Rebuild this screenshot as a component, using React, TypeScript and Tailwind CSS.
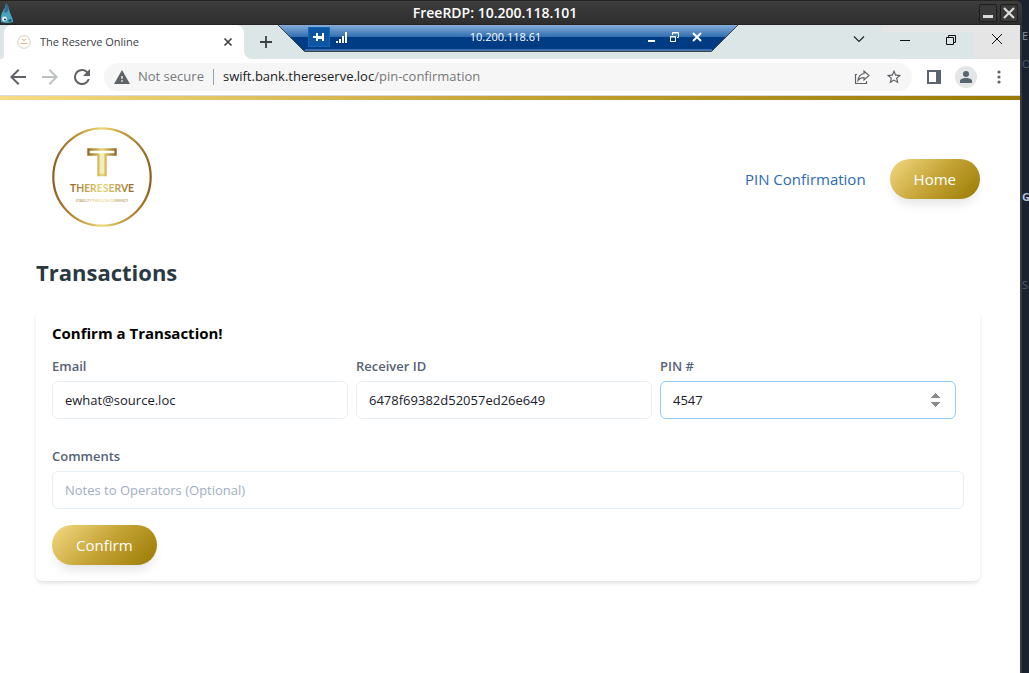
import React from "react";

const GOLD = "bg-[linear-gradient(135deg,#f3d983_0%,#c5a436_50%,#9a7a04_100%)]";

function SharkIcon() {
  return (
    <svg width="14" height="22" viewBox="0 0 14 22" aria-hidden="true">
      <path d="M6 1 Q9 4 9 8 Q11 13 13 18 V20 Q7 22 1 20 Q0 13 3 9 Q6 5 6 1Z" fill="#4aa3bd" />
      <path d="M6 1 Q9 4 8 9 Q6 12 4 10 Q6 6 6 1Z" fill="#2b6f8c" />
      <circle cx="4.500" cy="17" r="2.400" fill="#e8f4f8" />
      <circle cx="5" cy="17.500" r="1" fill="#1b3442" />
      <path d="M8 18 l3 -1 l1 2 l-3 1z" fill="#1f5c78" />
    </svg>
  );
}

function TitleBar() {
  return (
    <header className="flex h-[25px] shrink-0 items-center rounded-tr-md border-y border-[#262423] bg-linear-to-b from-[#3d3d3d] to-[#2e2e2e]">
      <div className="flex flex-1 pt-px">
        <SharkIcon />
      </div>
      <h1 className="pr-7 text-sm font-semibold text-white">FreeRDP: 10.200.118.101</h1>
      <div className="flex flex-1 justify-end gap-[3px] pr-1">
        <button aria-label="Minimize viewer" className="flex size-[18px] items-center justify-center rounded-xs border border-[#1c1c1c] bg-[#3a3a3a]">
          <svg width="16" height="16" viewBox="0 0 16 16"><rect x="3" y="10" width="10" height="3" fill="#dcdcdc" /></svg>
        </button>
        <button aria-label="Close viewer" className="flex size-[18px] items-center justify-center rounded-xs border border-[#1c1c1c] bg-[#3a3a3a]">
          <svg width="16" height="16" viewBox="0 0 16 16"><path d="M3 3 L13 13 M13 3 L3 13" stroke="#dcdcdc" strokeWidth="2.200" /></svg>
        </button>
      </div>
    </header>
  );
}

function ConnectionBar() {
  return (
    <div className="absolute top-0 left-[278px] h-[27px] w-[460px]">
      <svg className="absolute inset-0" width="460" height="27" viewBox="0 0 460 27" aria-hidden="true">
        <defs>
          <linearGradient id="bar" x1="0" y1="0" x2="0" y2="1">
            <stop offset="0" stopColor="#86add9" />
            <stop offset="0.460" stopColor="#2f6db0" />
            <stop offset="0.470" stopColor="#003c84" />
            <stop offset="1" stopColor="#003c84" />
          </linearGradient>
        </defs>
        <path d="M0 0 H460 L434 26 H26 Z" fill="url(#bar)" />
        <path d="M27 25 H434" stroke="#7fa6d6" />
        <path d="M0 0 L26.500 26.500 H433.500 L460 0" fill="none" stroke="#3c444c" />
      </svg>
      <div className="relative flex h-[23px] items-center pr-[35px] pl-[30px]">
        <div className="flex flex-1 items-center gap-[6px]">
          <button aria-label="Pin bar" className="flex h-5 w-[22px] items-center justify-center border border-[#1566b8] bg-[#0d55a3]">
            <svg width="14" height="12" viewBox="0 0 14 12" fill="#fff"><path d="M1 5h4v2H1zM4 2h2v8H4zM6 5h5v3H6zM10 2h2v8h-2z" /></svg>
          </button>
          <svg width="12" height="12" viewBox="0 0 12 12" fill="#fff" aria-hidden="true"><path d="M0 10h2v2H0zM3 8h2v4H3zM6 5h2v7H6zM9 1h2v11H9z" /></svg>
        </div>
        <span className="pt-[2px] text-[11px] text-white">10.200.118.61</span>
        <div className="flex flex-1 items-center justify-end gap-[11px]">
          <button aria-label="Minimize session">
            <svg width="12" height="12" viewBox="0 0 12 12"><path d="M3 9h7v2H3z" fill="#fff" /></svg>
          </button>
          <button aria-label="Restore session">
            <svg width="12" height="12" viewBox="0 0 12 12" fill="none" stroke="#fff"><path d="M2.500 5.500h5v5h-5zM2 6h6M4.500 4V1.500h6v5H9M4 2h7" /></svg>
          </button>
          <button aria-label="Close session">
            <svg width="12" height="12" viewBox="0 0 12 12"><path d="M2 2 L10 10 M10 2 L2 10" stroke="#fff" strokeWidth="2" /></svg>
          </button>
        </div>
      </div>
    </div>
  );
}

function TabStrip() {
  return (
    <div className="relative flex h-[34px] shrink-0 bg-[#dde6e7]">
      <div className="flex w-[244px] bg-white">
        <div className="w-1 rounded-br-lg bg-[#dde6e7]" />
        <div className="flex flex-1 items-center bg-[#dde6e7]">
          <div className="flex h-full flex-1 items-center rounded-t-lg bg-white pr-[10px] pl-[13px]">
            <svg width="14" height="14" viewBox="0 0 14 14" fill="none" aria-hidden="true">
              <circle cx="7" cy="7" r="6.300" stroke="#d9cdb8" />
              <path d="M5 4 L7 5.500 L9 4 M7 5v1.500M3.500 8.500h7" stroke="#d8b483" />
            </svg>
            <span className="ml-[9px] flex-1 text-[11px] text-[#3c4043]">The Reserve Online</span>
            <button aria-label="Close tab">
              <svg width="12" height="12" viewBox="0 0 12 12"><path d="M2.500 2.500 L9.500 9.500 M9.500 2.500 L2.500 9.500" stroke="#3c4043" strokeWidth="1.600" /></svg>
            </button>
          </div>
        </div>
      </div>
      <div className="flex flex-1 bg-white">
        <div className="flex flex-1 items-center rounded-bl-lg bg-[#dde6e7] pl-[15px]">
          <button aria-label="New tab">
            <svg width="14" height="14" viewBox="0 0 14 14"><path d="M7 1v12M1 7h12" stroke="#3c4043" strokeWidth="1.800" /></svg>
          </button>
        </div>
      </div>
      <ConnectionBar />
      <div className="relative flex items-center bg-[#dde6e7]">
        <button aria-label="Search tabs" className="flex h-full w-[46px] items-center justify-center pb-[6px]">
          <svg width="12" height="12" viewBox="0 0 12 12" fill="none" stroke="#222" strokeWidth="1.200"><path d="M1 3.500 L6 8.500 L11 3.500" /></svg>
        </button>
        <button aria-label="Minimize" className="flex h-full w-[46px] items-center justify-center border-t-[7px] border-[#e5e5e5] pb-3">
          <svg width="12" height="12" viewBox="0 0 12 12"><path d="M1 6.500h10" stroke="#111" /></svg>
        </button>
        <button aria-label="Restore" className="flex h-full w-[46px] items-center justify-center border-t-[7px] border-[#e5e5e5] pb-3">
          <svg width="12" height="12" viewBox="0 0 12 12" fill="none" stroke="#111"><path d="M1.500 3.500h7v7h-7zM3.500 3V1.500h7v7H9" /></svg>
        </button>
        <button aria-label="Close" className="flex h-full w-[46px] items-center justify-center bg-[#e5e5e5] pb-[6px]">
          <svg width="12" height="12" viewBox="0 0 12 12" stroke="#111"><path d="M1 1 L11 11 M11 1 L1 11" /></svg>
        </button>
      </div>
    </div>
  );
}

function Toolbar() {
  return (
    <nav aria-label="Browser toolbar" className="flex h-[37px] shrink-0 items-center border-b border-[#dadce0] bg-white pr-[13px] pl-[10px]">
      <div className="flex gap-4">
        <button aria-label="Back"><svg width="16" height="16" viewBox="4 4 16 16" fill="#5f6368"><path d="M20 11H7.830l5.590-5.590L12 4l-8 8 8 8 1.410-1.410L7.830 13H20v-2z" /></svg></button>
        <button aria-label="Forward"><svg width="16" height="16" viewBox="4 4 16 16" fill="#bdc1c0"><path d="M12 4l-1.410 1.410L16.170 11H4v2h12.170l-5.580 5.590L12 20l8-8z" /></svg></button>
        <button aria-label="Reload"><svg width="16" height="16" viewBox="4 4 16 16" fill="#5f6368"><path d="M17.650 6.350A7.960 7.960 0 0 0 12 4a8 8 0 1 0 7.730 10h-2.080A6 6 0 1 1 12 6c1.660 0 3.140.690 4.220 1.780L13 11h7V4l-2.350 2.350z" /></svg></button>
      </div>
      <div className="ml-[14px] flex h-7 flex-1 items-center rounded-full bg-[#f6f6f6] pr-[10px] pl-[10px] text-[13px]">
        <svg width="16" height="14" viewBox="1 2 22 19" fill="#5f6368" aria-hidden="true"><path d="M1 21h22L12 2 1 21zm12-3h-2v-2h2v2zm0-4h-2v-4h2v4z" /></svg>
        <span className="ml-2 text-[#75797d]">Not secure</span>
        <span className="mx-[9px] h-4 w-px bg-[#9aa0a6]" />
        <a href="#pin" className="flex-1 whitespace-nowrap text-[#777]"><span className="text-[#202124]">swift.bank.thereserve.loc</span>/pin-confirmation</a>
        <button aria-label="Share" className="mr-4">
          <svg width="16" height="16" viewBox="0 0 16 16" fill="none" stroke="#5f6368" strokeWidth="1.200"><path d="M3 5.500H1.500v9h11V12M10 2v2.500C6.500 5 4.500 7.500 4 11.500C5.500 9.500 7 8.500 10 8.500V11L15 6.500Z" /></svg>
        </button>
        <button aria-label="Bookmark">
          <svg width="16" height="16" viewBox="1 1 22 22" fill="#5f6368"><path d="M22 9.240l-7.190-.620L12 2 9.190 8.630 2 9.240l5.460 4.730L5.820 21 12 17.270 18.180 21l-1.630-7.030L22 9.240zM12 15.400l-3.760 2.270 1-4.280-3.320-2.880 4.380-.380L12 6.100l1.710 4.040 4.380.380-3.320 2.880 1 4.280L12 15.400z" /></svg>
        </button>
      </div>
      <button aria-label="Side panel" className="ml-[15px]">
        <svg width="14" height="14" viewBox="0 0 14 14"><path d="M0 0h14v14H0z" fill="#5a6370" /><path d="M2 2h7v10H2z" fill="#fff" /></svg>
      </button>
      <button aria-label="Profile" className="ml-[14px] flex size-[22px] items-center justify-center rounded-full bg-[#e4e5e6]">
        <svg width="12" height="12" viewBox="0 0 12 12" fill="#54656e"><circle cx="6" cy="3" r="3" /><path d="M0 12V10C0 8 3 7 6 7S12 8 12 10V12Z" /></svg>
      </button>
      <button aria-label="Browser menu" className="ml-[14px]">
        <svg width="16" height="16" viewBox="0 0 16 16" fill="#5f6368"><circle cx="8" cy="3" r="1.600" /><circle cx="8" cy="8" r="1.600" /><circle cx="8" cy="13" r="1.600" /></svg>
      </button>
    </nav>
  );
}

function Logo() {
  return (
    <svg width="100" height="100" viewBox="0 0 100 100" role="img" aria-label="The Reserve">
      <defs>
        <linearGradient id="ring" x1="0" y1="0" x2="1" y2="0">
          <stop offset="0" stopColor="#8f5f1f" />
          <stop offset="0.250" stopColor="#bf9438" />
          <stop offset="0.500" stopColor="#eadb78" />
          <stop offset="0.750" stopColor="#bf9438" />
          <stop offset="1" stopColor="#8f5f1f" />
        </linearGradient>
        <linearGradient id="letters" gradientUnits="userSpaceOnUse" x1="17" y1="0" x2="83" y2="0">
          <stop offset="0" stopColor="#936022" />
          <stop offset="0.500" stopColor="#e9d878" />
          <stop offset="1" stopColor="#936022" />
        </linearGradient>
        <linearGradient id="mark" gradientUnits="userSpaceOnUse" x1="35" y1="0" x2="65" y2="0">
          <stop offset="0" stopColor="#936022" />
          <stop offset="0.500" stopColor="#e9d878" />
          <stop offset="1" stopColor="#936022" />
        </linearGradient>
      </defs>
      <circle cx="50" cy="50" r="48.700" fill="none" stroke="url(#ring)" strokeWidth="2.200" />
      <path d="M50 26V48" stroke="#f3edb8" strokeWidth="5" />
      <path d="M46.500 26.500 V48 H53.500 V26.500 M46 27.500 H36.500 V22.500 H63.500 V27.500 H54" fill="none" stroke="url(#mark)" strokeWidth="2.400" />
      <text x="50" y="65" textAnchor="middle" fontFamily="Lato, sans-serif" fontWeight="700" fontSize="10.400" fill="url(#letters)">THERESERVE</text>
      <text x="50" y="75" textAnchor="middle" fontFamily="Lato, sans-serif" fontSize="3.400" fill="url(#letters)">STABILITY THROUGH CURRENCY</text>
    </svg>
  );
}

const fieldClass =
  "mt-[5px] block h-[38px] w-full rounded-md border bg-white px-3 text-[13px] outline-none placeholder:text-[#a0aec0]";
const labelClass = "block text-[13px] leading-5 font-semibold text-[#566274]";
const pillClass =
  "flex h-10 items-center rounded-full px-6 text-[15px] text-white shadow-[0_8px_12px_-4px_rgba(0,0,0,0.12)]";

function Field({ id, label, type = "text", value, active = false }: { id: string; label: string; type?: string; value: string; active?: boolean }) {
  return (
    <div className="flex-1 pr-2">
      <label htmlFor={id} className={labelClass}>{label}</label>
      <input
        id={id}
        type={type}
        defaultValue={value}
        className={`${fieldClass} text-[#1a202c] [&::-webkit-inner-spin-button]:opacity-100 ${active ? "border-[#90cdf4]" : "border-[#e6eff5]"}`}
      />
    </div>
  );
}

function Page() {
  return (
    <main className="flex-1 bg-white">
      <div className={`h-1 bg-[linear-gradient(90deg,#f8dc86_0%,#c5a436_50%,#9a7a04_100%)]`} />
      <div className="flex items-center justify-between pt-[27px] pr-10 pl-[52px]">
        <Logo />
        <nav className="flex items-center gap-6 pt-1 text-[15px]">
          <a href="#pin" className="text-[#2b6cb0]">PIN Confirmation</a>
          <a href="#home" className={`${pillClass} ${GOLD}`}>Home</a>
        </nav>
      </div>
      <div className="pr-10 pl-9">
        <h2 className="mt-[29px] text-[22px] leading-8 font-bold text-[#2a3a42]">Transactions</h2>
        <form className="mt-[21px] rounded-md px-4 pt-3 pb-4 shadow-[0_3px_5px_-1px_rgba(0,0,0,0.12),0_0_2px_rgba(0,0,0,0.05)]" onSubmit={(e) => e.preventDefault()}>
          <h3 className="text-[15px] leading-6 font-bold text-black">Confirm a Transaction!</h3>
          <div className="mt-[11px] flex">
            <Field id="email" label="Email" value="ewhat@source.loc" />
            <Field id="receiver" label="Receiver ID" value="6478f69382d52057ed26e649" />
            <Field id="pin" label="PIN #" type="number" value="4547" active />
          </div>
          <label htmlFor="comments" className={`mt-[27px] ${labelClass}`}>Comments</label>
          <input id="comments" type="text" placeholder="Notes to Operators (Optional)" className={`${fieldClass} border-[#e6eff5]`} />
          <button type="submit" className={`mt-4 ${pillClass} ${GOLD}`}>Confirm</button>
        </form>
      </div>
    </main>
  );
}

export default function App() {
  return (
    <div className="flex min-h-screen bg-[#1a2230] font-['Open_Sans','Noto_Sans',sans-serif]">
      <div className="flex min-w-0 flex-1 flex-col">
        <TitleBar />
        <div className="flex flex-1 flex-col border-r-2 border-[#383838]">
          <TabStrip />
          <Toolbar />
          <Page />
        </div>
      </div>
      <aside className="flex w-[7px] shrink-0 flex-col overflow-hidden text-[11px] leading-4 text-[#8494a8]">
        <span className="mt-7">E</span>
        <span className="mt-3 text-[#4d5a6c]">O</span>
        <span className="mt-[117px] font-bold text-[#b4c4dc]">G</span>
        <span className="mt-[72px] text-[#4d5a6c]">S</span>
      </aside>
    </div>
  );
}
